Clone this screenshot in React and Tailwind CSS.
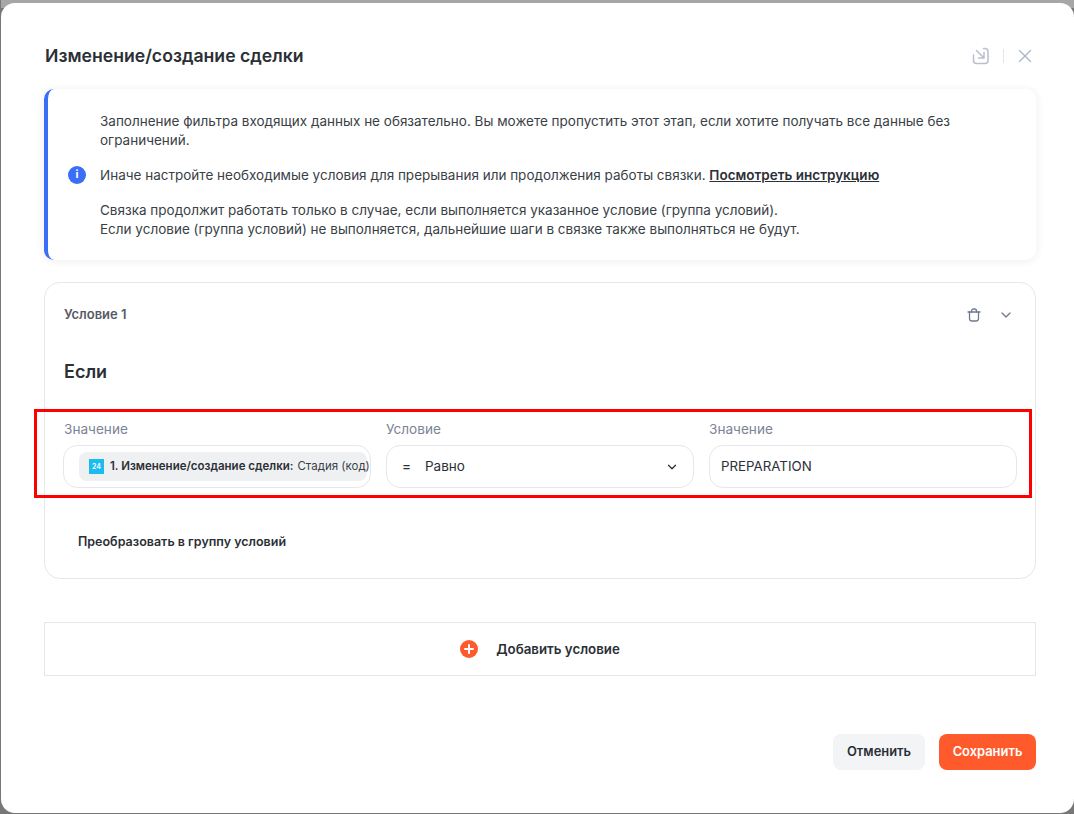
import { ChevronDown, X } from 'lucide-react';

const labelClass = 'text-[13.6px] leading-[20px] text-[#7b8494] mb-[6px] h-[20px]';
const fieldClass = 'h-[43px] rounded-[14px] border border-[#e6e7ea] bg-white flex items-center';

const App = () => {
  return (
    <div className="relative w-[1074px] h-[814px] overflow-hidden bg-[#777777] font-['Inter',sans-serif] text-[#2b2f36]">
      <div className="absolute left-[1px] right-0 top-0 h-[8px] bg-[#a6a6a6]" />
      <div className="relative ml-[1px] mt-[3px] h-[810px] rounded-[14px] bg-white pl-[43px] pr-[38px] pt-[41px]">
        {/* Header */}
        <div className="flex items-center justify-between h-[24px]">
          <h1 className="ml-[1px] text-[17.65px] leading-[24px] font-semibold text-[#2b2f36]">Изменение/создание сделки</h1>
          <div className="flex items-center">
            <svg width="18" height="18" viewBox="0 0 18 18" fill="none" stroke="#b9bfcc" strokeWidth="1.5" strokeLinecap="round" strokeLinejoin="round">
              <path d="M1.500 8v5.500c0 1.700 1.300 3 3 3h8.500c1.700 0 3-1.300 3-3V4.500c0-1.700-1.300-3-3-3h-1.500" />
              <path d="M4.500 3.500l7.500 7.500M12 5.500V11H6.500" />
            </svg>
            <div className="w-[1px] h-[14px] bg-[#e3e5e9] ml-[13px] mr-[10px]" />
            <X size={22} strokeWidth={1.4} color="#a9b4c8" />
          </div>
        </div>

        {/* Info block */}
        <div className="mt-[21px] h-[171px] rounded-[10px] border-l-[4px] border-[#3b6ef6] bg-white shadow-[0_1px_10px_rgba(30,40,60,0.08)] flex items-center pl-[20px] pr-[40px]">
          <div className="w-[18px] h-[18px] rounded-full bg-[#3b6ef6] text-white flex items-center justify-center text-[11px] font-bold shrink-0">i</div>
          <div className="ml-[14px] pt-[1px] text-[13.5px] leading-[19px] text-[#3a3f47]">
            <p>Заполнение фильтра входящих данных не обязательно. Вы можете пропустить этот этап, если хотите получать все данные без ограничений.</p>
            <p className="mt-[16px]">
              Иначе настройте необходимые условия для прерывания или продолжения работы связки.{' '}
              <span className="font-semibold underline text-[#2b2f36]">Посмотреть инструкцию</span>
            </p>
            <p className="mt-[16px]">Связка продолжит работать только в случае, если выполняется указанное условие (группа условий).</p>
            <p>Если условие (группа условий) не выполняется, дальнейшие шаги в связке также выполняться не будут.</p>
          </div>
        </div>

        {/* Condition card */}
        <div className="mt-[22px] h-[297px] rounded-[16px] border border-[#e6e7ea] px-[18px] pt-[22px]">
          <div className="flex items-center justify-between h-[20px]">
            <span className="ml-[1px] text-[13px] font-semibold text-[#565b64]">Условие 1</span>
            <div className="flex items-center gap-[16px] mr-[3px]">
              <svg width="16" height="16" viewBox="0 0 16 16" fill="none" stroke="#6f7a8e" strokeWidth="1.300" strokeLinecap="round" strokeLinejoin="round">
                <path d="M2 5h12" />
                <path d="M5.500 5V4a2 2 0 0 1 2-2h1a2 2 0 0 1 2 2v1" />
                <path d="M3.500 5v6.500A2.500 2.500 0 0 0 6 14h4a2.500 2.500 0 0 0 2.500-2.500V5" />
              </svg>
              <ChevronDown size={16} strokeWidth={2} color="#6f7a8e" />
            </div>
          </div>
          <h2 className="ml-[1px] mt-[35px] text-[18px] leading-[24px] font-semibold text-[#2b2f36]">Если</h2>
          <div className="mt-[35px] grid grid-cols-3 gap-[15px]">
            <div className="min-w-0">
              <div className={`${labelClass} ml-[1px]`}>Значение</div>
              <div className={`${fieldClass} pl-[15px] pr-[3px]`}>
                <div className="flex-1 min-w-0 h-[29px] rounded-[8px] bg-[#eff0f2] flex items-center pl-[10px] whitespace-nowrap text-[11.5px]">
                  <div className="w-[15px] h-[15px] bg-[#1bbcf0] text-white text-[7px] leading-none font-semibold flex items-center justify-center shrink-0">24</div>
                  <span className="ml-[6px] font-semibold text-[#2b2f36]">1. Изменение/создание сделки:</span>
                  <span className="ml-[4px] text-[#3a3f47]">Стадия (код)</span>
                </div>
              </div>
            </div>
            <div className="min-w-0">
              <div className={labelClass}>Условие</div>
              <div className={`${fieldClass} pl-[15px] pr-[14px] text-[13.5px]`}>
                <span className="w-[23px] font-medium">=</span>
                <span className="flex-1">Равно</span>
                <ChevronDown size={14} strokeWidth={2.25} color="#2b2f36" />
              </div>
            </div>
            <div className="min-w-0">
              <div className={labelClass}>Значение</div>
              <div className={`${fieldClass} pl-[11px] text-[13.3px]`}>PREPARATION</div>
            </div>
          </div>
          <div className="mt-[46px] ml-[15px] text-[12.5px] leading-[16px] font-semibold text-[#2b2f36]">Преобразовать в группу условий</div>
        </div>

        {/* Add condition */}
        <div className="mt-[43px] h-[54px] border border-[#e6e7ea] flex items-center justify-center gap-[18px]">
          <div className="w-[18px] h-[18px] rounded-full bg-[#ff5a2b] flex items-center justify-center">
            <svg width="10" height="10" viewBox="0 0 10 10" stroke="white" strokeWidth="2" strokeLinecap="round">
              <path d="M5 1v8M1 5h8" />
            </svg>
          </div>
          <span className="pt-[1px] text-[13.3px] font-semibold text-[#2b2f36]">Добавить условие</span>
        </div>

        {/* Footer */}
        <div className="mt-[58px] flex justify-end gap-[14px]">
          <button className="h-[36px] w-[92px] rounded-[8px] bg-[#f3f4f6] text-[12.9px] font-semibold text-[#2b2f36]">Отменить</button>
          <button className="h-[36px] w-[97px] rounded-[8px] bg-[#ff5a2b] text-[12.9px] font-semibold text-white">Сохранить</button>
        </div>
      </div>

      {/* Red highlight */}
      <div className="absolute left-[34px] top-[409px] w-[998px] h-[89px] border-[3px] border-[#ff0000] pointer-events-none" />
    </div>
  );
};

export default App;
